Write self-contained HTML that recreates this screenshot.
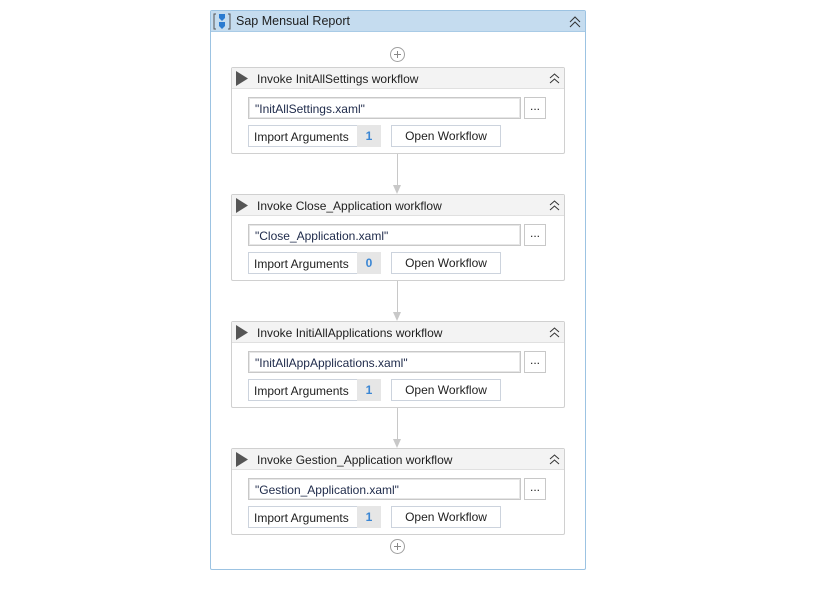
<!DOCTYPE html><html><head><style>
body{margin:0;width:825px;height:595px;background:#fff;font-family:"Liberation Sans",sans-serif;font-size:12px;color:#1e1e1e;position:relative;overflow:hidden}
.a{position:absolute;box-sizing:border-box}
.outer{left:210px;top:10px;width:376px;height:560px;border:1px solid #9cc3e2;border-radius:2px}
.ohd{left:211px;top:11px;width:374px;height:21px;background:#c5dcef;border-bottom:1px solid #a9cbe6}
.blk{left:231px;width:334px;height:87px;border:1px solid #d0d0d0;border-radius:2px;background:#fff}
.bh{left:0;top:0;width:332px;height:21px;background:#f3f3f3;border-bottom:1px solid #e0e0e0}
.inp{left:16px;top:29px;width:273px;height:22px;border:1px solid #c8c8c8;box-shadow:inset 0 0 0 1px #e6e6e6;padding:4px 6px;color:#1e2a4a}
.dot{left:292px;top:29px;width:22px;height:22px;border:1px solid #c8c8c8;text-align:center;line-height:17px}
.imp{left:16px;top:57px;width:133px;height:22px;border:1px solid #ccd3dd;padding:4px 5px}
.num{left:125px;top:57px;width:24px;height:22px;background:#e6e6e6;color:#3a86d4;text-align:center;line-height:22px;font-weight:bold}
.ow{left:159px;top:57px;width:110px;height:22px;border:1px solid #ccd3dd;text-align:center;line-height:21px}
.ln{left:397px;width:1px;background:#c8c8c8}
.ar{left:393px;width:0;height:0;border-left:4.5px solid transparent;border-right:4.5px solid transparent;border-top:9px solid #c8c8c8}
.plus{left:390px;width:15px;height:15px;border:1px solid #a0a0a0;border-radius:50%;}
.plus:before{content:"";position:absolute;left:3px;top:6px;width:7px;height:1px;background:#888}
.plus:after{content:"";position:absolute;left:6px;top:3px;width:1px;height:7px;background:#888}
</style></head><body>
<div class="a outer"></div>
<div class="a ohd">
<svg class="a" style="left:2px;top:2px" width="18" height="17"><path d="M3 1H1V16H3M15 1H17V16H15" stroke="#555" fill="none"/><path d="M6 1H12V5L9 8L6 5Z" fill="#2b7bd0"/><path d="M6 9H12V13L9 16L6 13Z" fill="#2b7bd0"/></svg>
<div class="a" style="left:25px;top:3px;font-size:12.5px">Sap Mensual Report</div>
<svg class="a" style="left:358px;top:5px" width="12" height="12"><path d="M1 6L6 1L11 6M1 11L6 6L11 11" stroke="#333" fill="none"/></svg>
</div>
<div class="a plus" style="top:47px"></div>
<div class="a plus" style="top:539px"></div>

<div class="a ln" style="top:154px;height:32px"></div><div class="a ar" style="top:185px"></div>
<div class="a ln" style="top:281px;height:32px"></div><div class="a ar" style="top:312px"></div>
<div class="a ln" style="top:408px;height:32px"></div><div class="a ar" style="top:439px"></div>

<div class="a blk" style="top:67px"><div class="a bh"><svg class="a" style="left:4px;top:3px" width="12" height="15"><path d="M0 0L12 7.5L0 15Z" fill="#555"/></svg><div class="a" style="left:25px;top:4px">Invoke InitAllSettings workflow</div><svg class="a" style="left:317px;top:5px" width="11" height="11"><path d="M1 5L5.5 1L10 5M1 10L5.5 6L10 10" stroke="#333" fill="none"/></svg></div>
<div class="a inp">"InitAllSettings.xaml"</div><div class="a dot">...</div><div class="a imp">Import Arguments</div><div class="a num">1</div><div class="a ow">Open Workflow</div></div>

<div class="a blk" style="top:194px"><div class="a bh"><svg class="a" style="left:4px;top:3px" width="12" height="15"><path d="M0 0L12 7.5L0 15Z" fill="#555"/></svg><div class="a" style="left:25px;top:4px">Invoke Close_Application workflow</div><svg class="a" style="left:317px;top:5px" width="11" height="11"><path d="M1 5L5.5 1L10 5M1 10L5.5 6L10 10" stroke="#333" fill="none"/></svg></div>
<div class="a inp">"Close_Application.xaml"</div><div class="a dot">...</div><div class="a imp">Import Arguments</div><div class="a num">0</div><div class="a ow">Open Workflow</div></div>

<div class="a blk" style="top:321px"><div class="a bh"><svg class="a" style="left:4px;top:3px" width="12" height="15"><path d="M0 0L12 7.5L0 15Z" fill="#555"/></svg><div class="a" style="left:25px;top:4px">Invoke InitiAllApplications workflow</div><svg class="a" style="left:317px;top:5px" width="11" height="11"><path d="M1 5L5.5 1L10 5M1 10L5.5 6L10 10" stroke="#333" fill="none"/></svg></div>
<div class="a inp">"InitAllAppApplications.xaml"</div><div class="a dot">...</div><div class="a imp">Import Arguments</div><div class="a num">1</div><div class="a ow">Open Workflow</div></div>

<div class="a blk" style="top:448px"><div class="a bh"><svg class="a" style="left:4px;top:3px" width="12" height="15"><path d="M0 0L12 7.5L0 15Z" fill="#555"/></svg><div class="a" style="left:25px;top:4px">Invoke Gestion_Application workflow</div><svg class="a" style="left:317px;top:5px" width="11" height="11"><path d="M1 5L5.5 1L10 5M1 10L5.5 6L10 10" stroke="#333" fill="none"/></svg></div>
<div class="a inp">"Gestion_Application.xaml"</div><div class="a dot">...</div><div class="a imp">Import Arguments</div><div class="a num">1</div><div class="a ow">Open Workflow</div></div>
</body></html>
